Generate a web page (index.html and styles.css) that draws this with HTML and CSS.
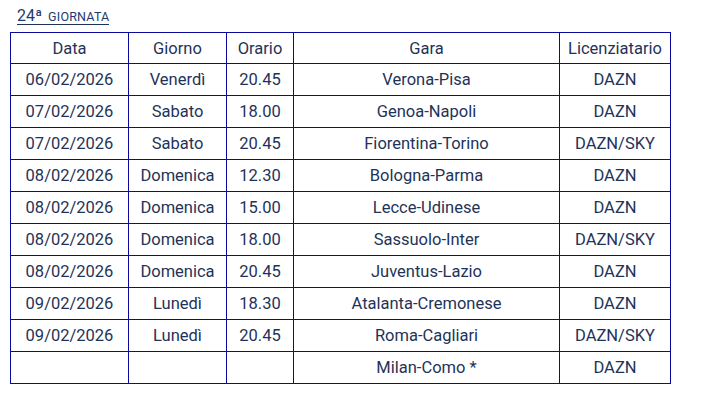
FILE: index.html
```html
<!DOCTYPE html>
<html lang="it">
<head>
<meta charset="utf-8">
<title>24ª Giornata</title>
<link rel="stylesheet" href="styles.css">
</head>
<body>
<div class="page">
  <h2 class="title"><span class="num">24ª</span> <span class="word">GIORNATA</span></h2>
  <table class="cal">
    <colgroup>
      <col class="c-data"><col class="c-giorno"><col class="c-ora"><col class="c-gara"><col class="c-lic">
    </colgroup>
    <thead>
      <tr><th>Data</th><th>Giorno</th><th>Orario</th><th>Gara</th><th>Licenziatario</th></tr>
    </thead>
    <tbody>
      <tr><td>06/02/2026</td><td>Venerdì</td><td>20.45</td><td>Verona-Pisa</td><td>DAZN</td></tr>
      <tr><td>07/02/2026</td><td>Sabato</td><td>18.00</td><td>Genoa-Napoli</td><td>DAZN</td></tr>
      <tr><td>07/02/2026</td><td>Sabato</td><td>20.45</td><td>Fiorentina-Torino</td><td>DAZN/SKY</td></tr>
      <tr><td>08/02/2026</td><td>Domenica</td><td>12.30</td><td>Bologna-Parma</td><td>DAZN</td></tr>
      <tr><td>08/02/2026</td><td>Domenica</td><td>15.00</td><td>Lecce-Udinese</td><td>DAZN</td></tr>
      <tr><td>08/02/2026</td><td>Domenica</td><td>18.00</td><td>Sassuolo-Inter</td><td>DAZN/SKY</td></tr>
      <tr><td>08/02/2026</td><td>Domenica</td><td>20.45</td><td>Juventus-Lazio</td><td>DAZN</td></tr>
      <tr><td>09/02/2026</td><td>Lunedì</td><td>18.30</td><td>Atalanta-Cremonese</td><td>DAZN</td></tr>
      <tr><td>09/02/2026</td><td>Lunedì</td><td>20.45</td><td>Roma-Cagliari</td><td>DAZN/SKY</td></tr>
      <tr><td></td><td></td><td></td><td>Milan-Como *</td><td>DAZN</td></tr>
    </tbody>
  </table>
</div>
</body>
</html>
```
FILE: styles.css
```css
html, body {
  margin: 0;
  padding: 0;
  background: #ffffff;
}
body {
  font-family: Roboto, "Liberation Sans", sans-serif;
  color: #1f3358;
}
.page {
  padding: 3px 0 0 10px;
}
.title {
  margin: 0 0 7px 7px;
  font-weight: 400;
  line-height: 21px;
  height: 21px;
  display: inline-block;
  border-bottom: 1px solid #1f3358;
  color: #1f3a6e;
}
.title .num {
  font-size: 16px;
}
.title .word {
  font-size: 12.5px;
  letter-spacing: 0.2px;
}
.cal {
  border-collapse: collapse;
  table-layout: fixed;
  width: 661px;
  font-size: 16.5px;
}
.cal th, .cal td {
  border: 1px solid #0a0aa0;
  text-align: center;
  font-weight: 400;
  padding: 0;
  white-space: nowrap;
}
.cal thead tr { height: 31px; }
.cal tbody tr { height: 32px; }
.c-data { width: 118px; }
.c-giorno { width: 98px; }
.c-ora { width: 67px; }
.c-gara { width: 266px; }
.c-lic { width: 111px; }
```
